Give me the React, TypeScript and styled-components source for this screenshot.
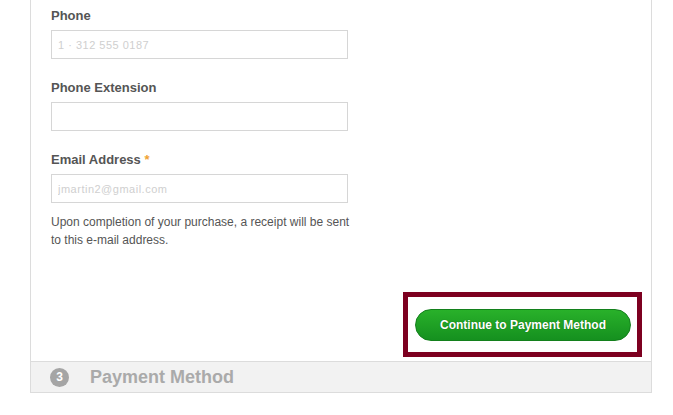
import React from "react";
import styled, { createGlobalStyle } from "styled-components";

const Global = createGlobalStyle`
  html, body { margin: 0; padding: 0; background: #fff; }
  body { font-family: "Liberation Sans", Arial, sans-serif; }
`;

const Panel = styled.div`
  margin-left: 30px;
  width: 620px;
  border-left: 1px solid #dcdcdc;
  border-right: 1px solid #dcdcdc;
  border-bottom: 1px solid #dcdcdc;
`;

const Body = styled.div`
  padding: 7px 9px 4px 20px;
  display: flex;
  flex-direction: column;
`;

const Field = styled.div<{ $gap?: number }>`
  display: flex;
  flex-direction: column;
  margin-bottom: ${(p) => p.$gap ?? 20}px;
`;

const Label = styled.label`
  font-size: 13px;
  line-height: 18px;
  font-weight: bold;
  color: #555;
  margin-bottom: 5px;
`;

const Req = styled.span`
  color: #f0a233;
`;

const Input = styled.input`
  box-sizing: border-box;
  width: 297px;
  height: 29px;
  border: 1px solid #d6d6d6;
  padding: 0 6px;
  font-family: "Liberation Sans", Arial, sans-serif;
  font-size: 11px;
  color: #cfcfcf;
  letter-spacing: 0.5px;
  outline: none;
`;

const Help = styled.p`
  margin: 10px 0 0;
  width: 310px;
  font-size: 12px;
  line-height: 18px;
  color: #555;
`;

const ActionRow = styled.div`
  display: flex;
  justify-content: flex-end;
  margin-top: 43px;
`;

const Highlight = styled.div`
  border: 5px solid #7d0020;
  padding: 12px 6px 11px 7px;
  display: flex;
`;

const Button = styled.button`
  width: 216px;
  height: 32px;
  border-radius: 16px;
  border: 1px solid #13801c;
  background: linear-gradient(#29b12a, #15901f);
  color: #fff;
  font-family: "Liberation Sans", Arial, sans-serif;
  font-size: 12px;
  font-weight: bold;
  text-shadow: 0 0 1px rgba(0, 60, 0, 0.6);
  cursor: pointer;
  padding: 0;
`;

const Step = styled.div`
  height: 30px;
  border-top: 1px solid #dcdcdc;
  background: #f2f2f2;
  display: flex;
  align-items: center;
  padding-left: 19px;
`;

const StepNum = styled.span`
  width: 19px;
  height: 19px;
  border-radius: 50%;
  background: #a5a5a5;
  color: #fff;
  font-size: 12px;
  font-weight: bold;
  display: flex;
  align-items: center;
  justify-content: center;
  margin-right: 21px;
`;

const StepTitle = styled.span`
  font-size: 18px;
  font-weight: bold;
  color: #aaaaaa;
`;

export default function App() {
  return (
    <>
      <Global />
      <Panel>
        <Body>
          <Field>
            <Label>Phone</Label>
            <Input defaultValue="1 · 312 555 0187" readOnly />
          </Field>
          <Field>
            <Label>Phone Extension</Label>
            <Input defaultValue="" readOnly />
          </Field>
          <Field $gap={0}>
            <Label>
              Email Address <Req>*</Req>
            </Label>
            <Input defaultValue="jmartin2@gmail.com" readOnly />
            <Help>
              Upon completion of your purchase, a receipt will be sent to this
              e-mail address.
            </Help>
          </Field>
          <ActionRow>
            <Highlight>
              <Button>Continue to Payment Method</Button>
            </Highlight>
          </ActionRow>
        </Body>
        <Step>
          <StepNum>3</StepNum>
          <StepTitle>Payment Method</StepTitle>
        </Step>
      </Panel>
    </>
  );
}
